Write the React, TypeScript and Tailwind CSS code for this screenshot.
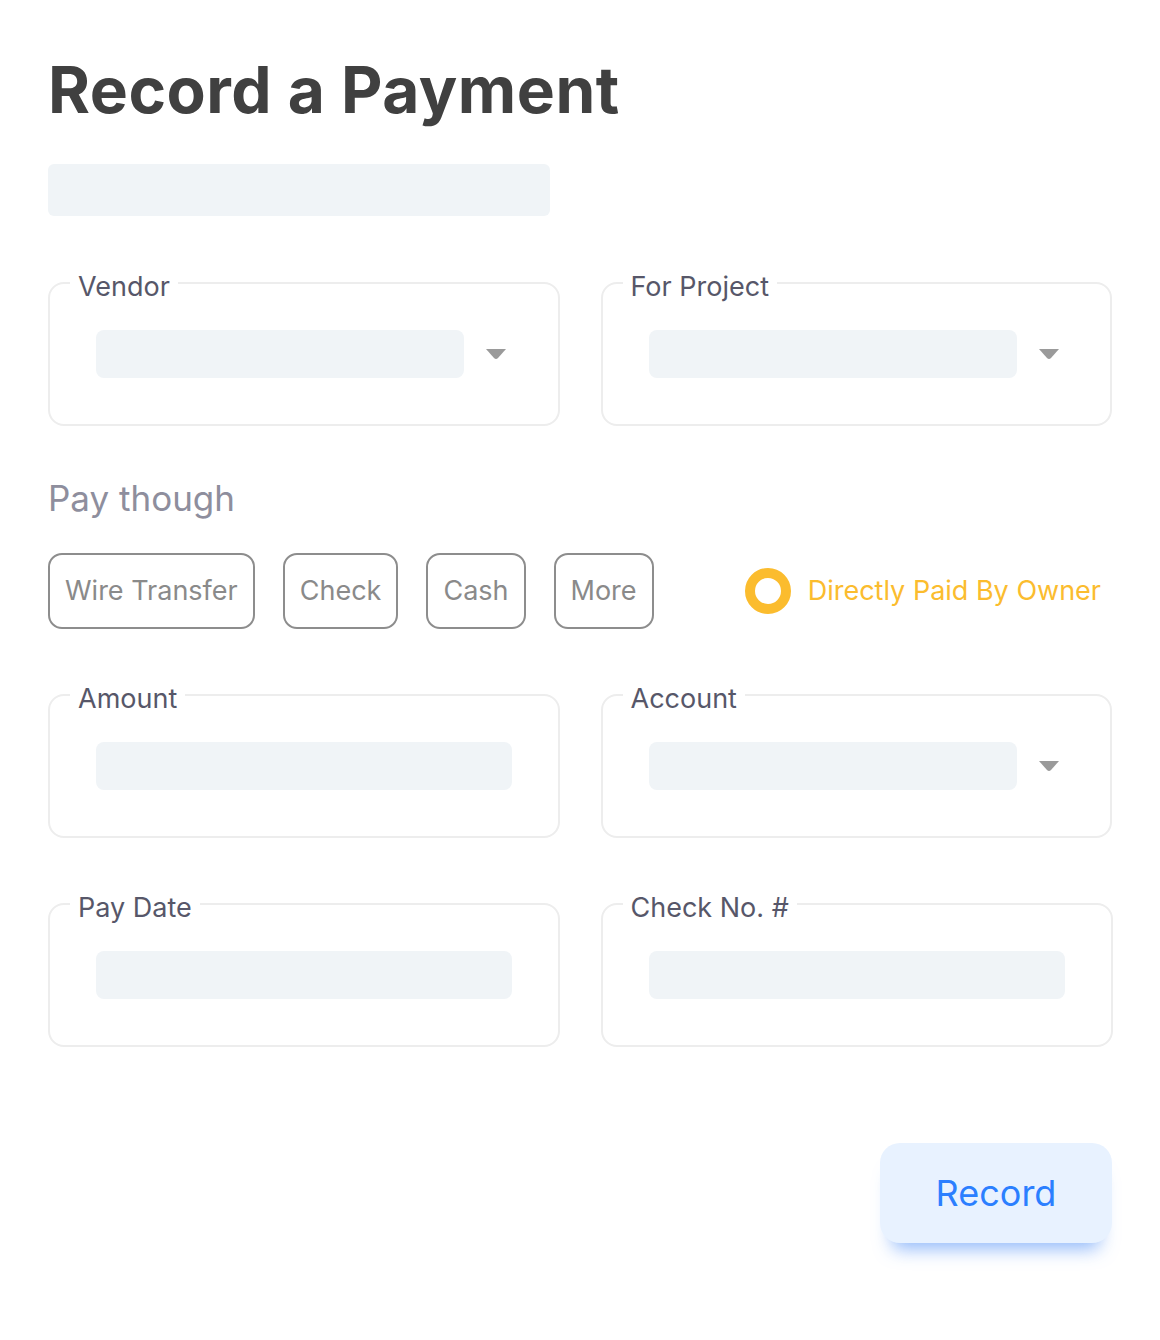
import React from "react";

const font = { fontFamily: "Inter, 'Noto Sans', sans-serif" };

function Arrow() {
  return (
    <svg width="20" height="11" viewBox="0 0 20 11" className="shrink-0">
      <path d="M0 0 H20 L12 9 Q10 11 8 9 Z" fill="#9a9a9a" />
    </svg>
  );
}

function Field({ label, barW, arrow }: { label: string; barW: string; arrow?: boolean }) {
  return (
    <fieldset className="rounded-[16px] border-2 border-[#ededed] px-[46px] pt-[27px] pb-[46px]">
      <legend className="-ml-[26px] px-[8px] pt-[8px] text-[27px] leading-[32px] text-[#575769]">{label}</legend>
      <div className="flex items-center gap-[22px]">
        <div className={`h-[48px] rounded-[8px] bg-[#f0f4f7] ${barW}`} />
        {arrow && <Arrow />}
      </div>
    </fieldset>
  );
}

function Pill({ children }: { children: React.ReactNode }) {
  return (
    <div className="flex h-[76px] items-center rounded-[14px] border-2 border-[#8d8d8d] px-[15px] text-[27px] text-[#8a8a8a]">
      {children}
    </div>
  );
}

export default function App() {
  return (
    <div className="min-h-[1340px] bg-white px-[48px] pt-[54px]" style={font}>
      <h1 className="text-[64px] font-bold leading-[72px] tracking-[0.5px] text-[#404040]">Record a Payment</h1>
      <div className="mt-[38px] h-[52px] w-[502px] rounded-[6px] bg-[#f0f4f7]" />

      <div className="mt-[47px] grid grid-cols-2 gap-x-[41px]">
        <Field label="Vendor" barW="w-[368px]" arrow />
        <Field label="For Project" barW="w-[368px]" arrow />
      </div>

      <div className="mt-[52px] text-[35px] leading-[40px] text-[#8e8e9d]">Pay though</div>

      <div className="mt-[35px] flex items-center">
        <div className="flex gap-[28px]">
          <Pill>Wire Transfer</Pill>
          <Pill>Check</Pill>
          <Pill>Cash</Pill>
          <Pill>More</Pill>
        </div>
        <div className="ml-auto mr-[11px] flex items-center gap-[17px]">
          <div className="h-[46px] w-[46px] rounded-full border-[10px] border-[#fbbc2e]" />
          <span className="text-[27px] text-[#fbbc2e]">Directly Paid By Owner</span>
        </div>
      </div>

      <div className="mt-[46px] grid grid-cols-2 gap-x-[41px]">
        <Field label="Amount" barW="w-[416px]" />
        <Field label="Account" barW="w-[368px]" arrow />
      </div>

      <div className="mt-[46px] grid grid-cols-2 gap-x-[41px]">
        <Field label="Pay Date" barW="w-[416px]" />
        <Field label="Check No. #" barW="w-[416px]" />
      </div>

      <div className="mt-[96px] flex justify-end">
        <button className="h-[100px] w-[232px] rounded-[20px] bg-[#e8f2ff] text-[36px] text-[#2b7fff] shadow-[0_18px_18px_-12px_rgba(59,130,246,0.55)]">
          Record
        </button>
      </div>
    </div>
  );
}
